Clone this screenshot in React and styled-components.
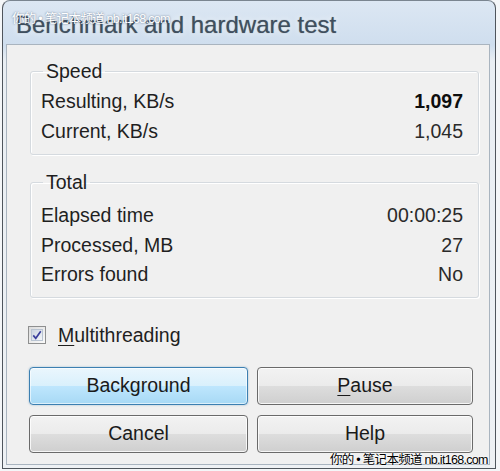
import React from 'react'
import styled, { createGlobalStyle } from 'styled-components'

const GlobalStyle = createGlobalStyle`
  html, body {
    margin: 0;
    padding: 0;
    background: #ffffff;
  }
  body {
    font-family: 'Liberation Sans', Arial, sans-serif;
  }
`

const Screen = styled.div`
  position: relative;
  width: 500px;
  height: 471px;
  overflow: hidden;
  background: #f4f6f8;
`

const Frame = styled.div`
  box-sizing: border-box;
  margin-left: 2px;
  width: 494px;
  height: 469px;
  border: 1px solid #4f555c;
  border-top-color: #7a8590;
  border-radius: 8px 8px 0 0;
  background: linear-gradient(#dce7f3 0px, #cfdeee 44px, #e9eef3 60px, #eef1f4 100%);
  display: flex;
  flex-direction: column;
`

const TitleBar = styled.div`
  height: 43px;
  padding: 4px 0 0 13px;
  box-sizing: border-box;
  display: flex;
  align-items: center;
  font-family: 'Liberation Sans', Arial, sans-serif;
  font-size: 24px;
  color: #404f5e;
  text-shadow: 0 0 1px rgba(64, 79, 94, 0.6), 0 0 6px rgba(255, 255, 255, 0.9);
`

const Body = styled.div`
  flex: 1;
  margin: 0 5px 3px 3px;
  border: 1px solid #a9b4bf;
  background: #f0f0f0;
  padding: 0 10px 0 23px;
  display: flex;
  flex-direction: column;
`

const Group = styled.fieldset`
  margin: ${(p) => p.$top}px 0 0 0;
  padding: 0 15px ${(p) => p.$bottom}px 10px;
  border: 1px solid #d5dadf;
  border-radius: 3px;
  box-shadow: inset 1px 1px 0 #ffffff, 1px 1px 0 #ffffff;
  display: flex;
  flex-direction: column;
`

const Legend = styled.legend`
  padding: 0 3px;
  margin-left: 2px;
  font-size: 19.5px;
  line-height: 22px;
  color: #1e1e1e;
`

const Row = styled.div`
  height: ${(p) => p.$h || 30}px;
  display: flex;
  align-items: center;
  justify-content: space-between;
  font-size: 19.5px;
  color: #1f1f1f;
  &:first-of-type {
    margin-top: ${(p) => p.$first || 4}px;
  }
`

const Value = styled.span`
  font-weight: ${(p) => (p.$bold ? 700 : 400)};
  color: ${(p) => (p.$bold ? '#0e0e0e' : '#2a2a2a')};
`

const CheckRow = styled.label`
  margin-top: 26px;
  margin-left: -2px;
  display: flex;
  align-items: center;
  gap: 12px;
  font-size: 19.5px;
  color: #1f1f1f;
`

const Box = styled.span`
  box-sizing: border-box;
  width: 18px;
  height: 18px;
  border: 1px solid #8e8f8f;
  background: linear-gradient(135deg, #dcdcdc, #fafafa);
  padding: 2px;
  display: flex;
  align-items: center;
  justify-content: center;
`

const BoxInner = styled.span`
  width: 100%;
  height: 100%;
  box-sizing: border-box;
  border: 1px solid #b9c4d2;
  background: linear-gradient(135deg, #cbd4e0, #f4f6f9);
  display: flex;
  align-items: center;
  justify-content: center;
`

const Key = styled.span`
  text-decoration: underline;
  text-underline-offset: 3px;
`

const Buttons = styled.div`
  margin-top: 20px;
  margin-left: -1px;
  display: grid;
  grid-template-columns: 219px 216px;
  grid-auto-rows: 38px;
  column-gap: 9px;
  row-gap: 10px;
`

const Button = styled.button`
  box-sizing: border-box;
  font-family: 'Liberation Sans', Arial, sans-serif;
  font-size: 19.5px;
  color: #1a1a1a;
  border-radius: 4px;
  border: 1px solid ${(p) => (p.$focus ? '#3c7fb1' : '#6a6a6a')};
  background: ${(p) =>
    p.$focus
      ? 'linear-gradient(#eaf6fd 0%, #d9f0fc 50%, #bee6fd 51%, #a7d9f5 100%)'
      : 'linear-gradient(#f2f2f2 0%, #ebebeb 50%, #dddddd 51%, #cfcfcf 100%)'};
  box-shadow: inset 0 0 0 1px ${(p) => (p.$focus ? 'rgba(255,255,255,0.6)' : 'rgba(255,255,255,0.8)')}
    ${(p) => (p.$focus ? ', 0 0 2px rgba(60,127,177,0.5)' : '')};
  padding: 0;
`

const Watermark = styled.div`
  position: absolute;
  left: ${(p) => p.$x}px;
  top: ${(p) => p.$y}px;
  font-family: 'Liberation Sans', 'Noto Sans CJK SC', sans-serif;
  font-size: 12.5px;
  letter-spacing: -0.7px;
  white-space: nowrap;
  color: ${(p) => (p.$light ? '#ffffff' : '#000000')};
  text-shadow: ${(p) =>
    p.$light ? '0 0 2px rgba(40,60,90,0.7)' : '0 0 2px #ffffff, 0 0 2px #ffffff'};
`

export default function App() {
  return (
    <Screen>
      <GlobalStyle />
      <Frame>
        <TitleBar>Benchmark and hardware test</TitleBar>
        <Body>
          <Group $top={15} $bottom={8}>
            <Legend>Speed</Legend>
            <Row>
              <span>Resulting, KB/s</span>
              <Value $bold>1,097</Value>
            </Row>
            <Row>
              <span>Current, KB/s</span>
              <Value>1,045</Value>
            </Row>
          </Group>
          <Group $top={16} $bottom={7}>
            <Legend>Total</Legend>
            <Row $h={29.5} $first={8}>
              <span>Elapsed time</span>
              <Value>00:00:25</Value>
            </Row>
            <Row $h={29.5}>
              <span>Processed, MB</span>
              <Value>27</Value>
            </Row>
            <Row $h={29.5}>
              <span>Errors found</span>
              <Value>No</Value>
            </Row>
          </Group>
          <CheckRow>
            <Box>
              <BoxInner>
                <svg width="12" height="12" viewBox="0 0 12 12">
                  <path d="M1.5 6.5 L4.5 10 L10.5 1.5" fill="none" stroke="#3b3f9c" strokeWidth="2" />
                </svg>
              </BoxInner>
            </Box>
            <span>
              <Key>M</Key>ultithreading
            </span>
          </CheckRow>
          <Buttons>
            <Button $focus>Background</Button>
            <Button>
              <Key>P</Key>ause
            </Button>
            <Button>Cancel</Button>
            <Button>Help</Button>
          </Buttons>
        </Body>
      </Frame>
      <Watermark $light $x={12} $y={8}>你的 • 笔记本频道 nb.it168.com</Watermark>
      <Watermark $x={330} $y={449}>你的 • 笔记本频道 nb.it168.com</Watermark>
    </Screen>
  )
}
